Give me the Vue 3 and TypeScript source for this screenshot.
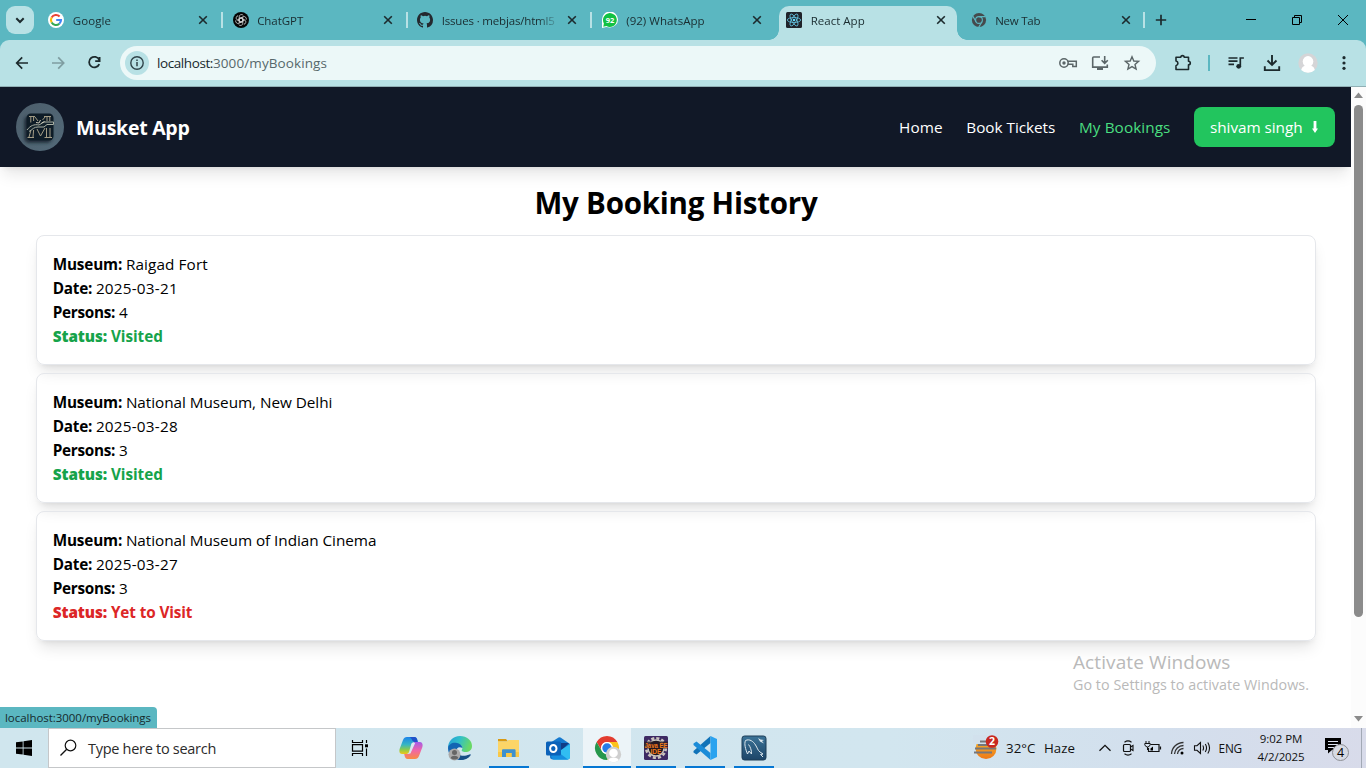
<script setup lang="ts">
import type { Directive } from 'vue'

interface Tab { title: string; icon: string; width: number; active?: boolean; sep?: boolean }
interface Booking {
  museum: string
  museumWidth: number
  date: string
  persons: number
  status: string
  statusWidth: number
  visited: boolean
}

const tabs: Tab[] = [
  { title: 'Google', icon: 'google', width: 38.5 },
  { title: 'ChatGPT', icon: 'gpt', width: 46, sep: true },
  { title: 'Issues · mebjas/html5', icon: 'github', width: 113, sep: true },
  { title: '(92) WhatsApp', icon: 'whatsapp', width: 78.5, sep: true },
  { title: 'React App', icon: 'react', width: 54, active: true },
  { title: 'New Tab', icon: 'chrome', width: 45 },
]

const bookings: Booking[] = [
  { museum: 'Raigad Fort', museumWidth: 82, date: '2025-03-21', persons: 4, status: 'Visited', statusWidth: 52, visited: true },
  { museum: 'National Museum, New Delhi', museumWidth: 206.5, date: '2025-03-28', persons: 3, status: 'Visited', statusWidth: 52, visited: true },
  { museum: 'National Museum of Indian Cinema', museumWidth: 250.5, date: '2025-03-27', persons: 3, status: 'Yet to Visit', statusWidth: 81.5, visited: false },
]

const apps = [
  { name: 'copilot', open: false },
  { name: 'edge', open: false },
  { name: 'files', open: true },
  { name: 'outlook', open: false },
  { name: 'chrome', open: true, active: true },
  { name: 'eclipse', open: true },
  { name: 'vscode', open: true },
  { name: 'mysql', open: true },
]

// Tracks a label so that it spans the given number of pixels.
const vFit: Directive<HTMLElement, number> = {
  mounted(el, { value }) {
    const count = (el.textContent ?? '').length
    if (!count) return
    const natural = el.getBoundingClientRect().width
    el.style.letterSpacing = `${((value - natural) / count).toFixed(3)}px`
  },
}
</script>

<template>
  <div class="screen">
    <div class="tabstrip">
      <div class="tab-search">
        <svg width="28" height="28" viewBox="0 0 28 28"><path d="M10.3 12.3l3.7 3.7 3.7-3.7" fill="none" stroke="#1d2b2e" stroke-width="2" /></svg>
      </div>
      <div v-for="t in tabs" :key="t.title" class="tab" :class="{ active: t.active, sep: t.sep }">
        <svg v-if="t.icon === 'google'" class="fav" viewBox="0 0 16 16">
          <circle cx="8" cy="8" r="8" fill="#fff" />
          <path d="M3.65 5.5A5 5 0 0 1 11.6 4.5" fill="none" stroke="#ea4335" stroke-width="2.1" />
          <path d="M3.65 5.5A5 5 0 0 0 3.65 10.5" fill="none" stroke="#fbbc05" stroke-width="2.1" />
          <path d="M3.65 10.5A5 5 0 0 0 11.3 11.7" fill="none" stroke="#34a853" stroke-width="2.1" />
          <path d="M11.3 11.7A5 5 0 0 0 13 8H8.2" fill="none" stroke="#4285f4" stroke-width="2.1" />
        </svg>
        <svg v-else-if="t.icon === 'gpt'" class="fav" viewBox="0 0 16 16">
          <circle cx="8" cy="8" r="8" fill="#050505" />
          <g fill="none" stroke="#d8d8d8" stroke-width=".75">
            <path v-for="a in 6" :key="a" :transform="`rotate(${a * 60} 8 8)`" d="M6.2 7V4.6A2.3 2.3 0 0 1 10.3 3.4M6.2 5l3.6 2.1V10" />
          </g>
        </svg>
        <svg v-else-if="t.icon === 'github'" class="fav" viewBox="0 0 16 16">
          <path fill="#24292f" d="M8 0C3.58 0 0 3.58 0 8c0 3.54 2.29 6.53 5.47 7.59.4.07.55-.17.55-.38 0-.19-.01-.82-.01-1.49-2.01.37-2.53-.49-2.69-.94-.09-.23-.48-.94-.82-1.13-.28-.15-.68-.52-.01-.53.63-.01 1.08.58 1.23.82.72 1.21 1.87.87 2.33.66.07-.52.28-.87.51-1.07-1.78-.2-3.64-.89-3.64-3.95 0-.87.31-1.59.82-2.15-.08-.2-.36-1.02.08-2.12 0 0 .67-.21 2.2.82a7.6 7.6 0 0 1 4 0c1.53-1.04 2.2-.82 2.2-.82.44 1.1.16 1.92.08 2.12.51.56.82 1.27.82 2.15 0 3.07-1.87 3.75-3.65 3.95.29.25.54.73.54 1.48 0 1.07-.01 1.93-.01 2.2 0 .21.15.46.55.38A8.01 8.01 0 0 0 16 8c0-4.42-3.58-8-8-8z" />
        </svg>
        <svg v-else-if="t.icon === 'whatsapp'" class="fav" viewBox="0 0 16 16">
          <path d="M0 16V8A8 8 0 1 1 8 15.500L4.200 15z" fill="#fff" />
          <path d="M1.300 14.700l.6-3.300A6.900 6.900 0 1 1 4.500 14z" fill="#12c143" />
          <text x="8.100" y="10.900" text-anchor="middle" class="badge92">92</text>
        </svg>
        <svg v-else-if="t.icon === 'react'" class="fav" viewBox="0 0 16 16">
          <rect width="16" height="16" rx="1.5" fill="#20232a" />
          <g fill="none" stroke="#61bfdc" stroke-width=".85">
            <ellipse cx="8" cy="8" rx="6.700" ry="2.500" />
            <ellipse cx="8" cy="8" rx="6.700" ry="2.500" transform="rotate(60 8 8)" />
            <ellipse cx="8" cy="8" rx="6.700" ry="2.500" transform="rotate(120 8 8)" />
          </g>
          <circle cx="8" cy="8" r="1.300" fill="#61dafb" />
        </svg>
        <svg v-else class="fav" viewBox="0 0 16 16">
          <circle cx="8" cy="8" r="7.100" fill="#454a4d" />
          <g stroke="#5bb7c1" stroke-width="1.100" fill="none">
            <circle cx="8" cy="8" r="3.400" />
            <path d="M8 4.600h6.500M5.050 9.700L1.800 4.100M10.950 9.700l-3.300 5.700" />
          </g>
        </svg>
        <span class="title"><span v-fit="t.width" class="fit">{{ t.title }}</span></span>
        <svg class="close" viewBox="0 0 10 10"><path d="M1.2 1.2l7.6 7.6M8.8 1.2L1.2 8.8" stroke="#1c2a2d" stroke-width="1.6" /></svg>
      </div>
      <div class="newtab">
        <svg width="12" height="12" viewBox="0 0 12 12"><path d="M6 .8v10.4M.8 6h10.4" stroke="#1c2a2d" stroke-width="1.7" /></svg>
      </div>
      <div class="winbtns">
        <svg viewBox="0 0 46 40"><path d="M18 19.5h10" stroke="#000" /></svg>
        <svg viewBox="0 0 46 40"><path d="M18.5 17.5h7v7h-7zM20.5 17.5v-2h7v7h-2" stroke="#000" fill="none" /></svg>
        <svg viewBox="0 0 46 40"><path d="M18 15l10 10M28 15L18 25" stroke="#000" /></svg>
      </div>
    </div>

    <div class="toolbar-wrap">
      <div class="toolbar">
        <svg class="nav-ic" viewBox="0 0 36 36"><path d="M28 18H17M22.2 12.4L16.7 18l5.5 5.6" stroke="#1c2a2d" stroke-width="1.7" fill="none" /></svg>
        <svg class="nav-ic" viewBox="0 0 36 36"><path d="M12 18h11.3M18.2 12.4l5.500 5.600-5.500 5.600" stroke="#7f9da1" stroke-width="1.7" fill="none" /></svg>
        <svg class="nav-ic" viewBox="0 0 36 36"><path d="M23.2 14.8A5.3 5.3 0 1 0 23.3 19.2M23.6 12v4.200h-4.400" stroke="#1c2a2d" stroke-width="1.8" fill="none" /></svg>
        <div class="omnibox">
          <div class="site-info">
            <svg width="16" height="16" viewBox="0 0 16 16"><circle cx="8" cy="8" r="6.2" fill="none" stroke="#30444a" stroke-width="1.4" /><path d="M8 7v4.3M8 4.5v1.5" stroke="#30444a" stroke-width="1.5" /></svg>
          </div>
          <span class="url"><span v-fit="56" class="fit host">localhost:</span><span v-fit="114" class="fit">3000/myBookings</span></span>
          <svg class="om-ic" viewBox="0 0 20 20">
            <g fill="none" stroke="#5b6668" stroke-width="1.500"><path d="M9.500 8.300h8.800v5.200h-3.500v-2.200H9.500" /><circle cx="6" cy="10" r="4.200" /></g>
            <circle cx="6" cy="10" r="1.700" fill="#5b6668" />
          </svg>
          <svg class="om-ic" viewBox="0 0 20 20"><path d="M10 4H3.700a1 1 0 0 0-1 1v9.100h14.600V11.500M14.700 3v7M11.600 7.200l3.100 3.100 3.100-3.100" fill="none" stroke="#5b6668" stroke-width="1.600" /><path d="M7 14h6v3H7z" fill="#5b6668" /></svg>
          <svg class="om-ic" viewBox="0 0 20 20"><path d="M10 3.700l1.800 4.300 4.800.4-3.600 3.100 1.100 4.600L10 13.600l-4.100 2.500L7 11.500 3.400 8.400 8.200 8z" fill="none" stroke="#5b6668" stroke-width="1.400" /></svg>
        </div>
        <div class="tools">
          <svg viewBox="0 0 20 20"><path d="M3 4.300H7.800a1.700 1.700 0 0 1 3.400 0H15.500V8.300a1.800 1.800 0 0 1 0 3.600V16.500H3V12.700a2.400 2.400 0 0 0 0-4.700z" fill="none" stroke="#1c2a2d" stroke-width="1.600" stroke-linejoin="round" /></svg>
          <i class="tool-sep"></i>
          <svg viewBox="0 0 20 20"><path d="M2.500 5h9M2.500 8.200h9M2.500 11.400h5.500M14.300 13.500V5h3.600" fill="none" stroke="#1c2a2d" stroke-width="1.700" /><circle cx="12.700" cy="13.300" r="2.400" fill="#1c2a2d" /></svg>
          <svg viewBox="0 0 20 20"><path d="M10 2v9.500M5.500 7.500L10 12l4.500-4.500M2.800 13.200v3.900h14.400v-3.900" fill="none" stroke="#1c2a2d" stroke-width="1.900" /></svg>
          <svg viewBox="0 0 20 20"><circle cx="10" cy="10" r="9.700" fill="#d5d5d7" /><circle cx="10" cy="8.400" r="5.300" fill="#fff" /><path d="M3.200 17c1-4 3.800-4.500 6.800-4.500s5.800.5 6.800 4.500A9.700 9.700 0 0 1 3.200 17z" fill="#fff" /></svg>
          <svg viewBox="0 0 20 20"><g fill="#1c2a2d"><circle cx="10" cy="4.700" r="1.600" /><circle cx="10" cy="10" r="1.600" /><circle cx="10" cy="15.300" r="1.600" /></g></svg>
        </div>
      </div>
    </div>

    <div class="viewport">
      <div class="page">
        <header class="app-header">
          <svg class="logo" viewBox="0 0 48 48">
            <defs>
              <linearGradient id="lg" x1="0" y1="0" x2="1" y2="1"><stop offset="0" stop-color="#4d5e6b" /><stop offset="1" stop-color="#526978" /></linearGradient>
              <filter id="soft" x="-30%" y="-30%" width="160%" height="160%"><feGaussianBlur stdDeviation="1.600" /></filter>
            </defs>
            <circle cx="24" cy="24" r="24" fill="url(#lg)" />
            <rect x="8" y="13" width="28" height="27" rx="5" fill="#17232d" opacity=".8" filter="url(#soft)" />
            <rect x="10.500" y="10.500" width="27" height="27" rx="4.500" fill="#0e1c27" />
            <g fill="none" stroke="#a39c85" stroke-width="1">
              <path d="M13 13.500h6M14.800 14v5.500M17.600 14v4M19 14l3 4M28 13.500h7M26.500 17l3-3.500M31 14v4M33.800 14v4" />
              <path d="M11.500 34.500h6.500M13 34l2-7M17 34l.6-7M28.500 34.500h7.500M30.500 34V25M34 34V25M21 26l3.500 7 4.500-8" />
            </g>
            <path d="M11 27c3.500-4.500 7-6 12-5l5-3h9.500v2.500H31l-3 2.500h-6c-4 0-5 2-9 4.500" fill="#14232c" stroke="#a9b0a4" stroke-width="1" />
            <path d="M20 19.500l3 .5 1.500-3M25.500 20l3-1.500" fill="none" stroke="#c9c7b5" />
          </svg>
          <span class="brand"><span v-fit="113.500" class="fit">Musket App</span></span>
          <nav class="links">
            <a class="fit" v-fit="43.500">Home</a>
            <a class="fit" v-fit="89">Book Tickets</a>
            <a class="fit current" v-fit="91.500">My Bookings</a>
          </nav>
          <button class="user">
            <span v-fit="92.500" class="fit">shivam singh</span>
            <svg width="8" height="12" viewBox="0 0 8 12"><path d="M2.600 0h2.800v7.500H7L4 12 1 7.500h1.600z" fill="#fff" /></svg>
          </button>
        </header>

        <main class="content">
          <h1><span v-fit="283" class="fit">My Booking History</span></h1>
          <section v-for="b in bookings" :key="b.museum" class="card">
            <p><strong v-fit="69.500" class="fit">Museum:</strong><span v-fit="b.museumWidth" class="fit">{{ b.museum }}</span></p>
            <p><strong v-fit="39.500" class="fit">Date:</strong><span v-fit="82" class="fit">{{ b.date }}</span></p>
            <p><strong v-fit="62.500" class="fit">Persons:</strong><span>{{ b.persons }}</span></p>
            <p class="status" :class="b.visited ? 'ok' : 'pending'"><strong v-fit="54.500" class="fit">Status:</strong><span v-fit="b.statusWidth" class="fit">{{ b.status }}</span></p>
          </section>
        </main>
      </div>
      <div class="scrollbar">
        <svg width="15" height="18" viewBox="0 0 15 18"><path d="M3 11L7.500 5.500 12 11z" fill="#8b8b8b" /></svg>
        <div class="thumb"></div>
        <svg class="down" width="15" height="18" viewBox="0 0 15 18"><path d="M3 6l4.500 5.500L12 6z" fill="#8b8b8b" /></svg>
      </div>
      <div class="watermark">
        <div class="wm-title"><span v-fit="157.500" class="fit">Activate Windows</span></div>
        <div class="wm-sub"><span v-fit="236" class="fit">Go to Settings to activate Windows.</span></div>
      </div>
      <div class="link-status"><span v-fit="146" class="fit">localhost:3000/myBookings</span></div>
    </div>

    <footer class="taskbar">
      <div class="start">
        <svg width="16" height="16" viewBox="0 0 16 16"><path d="M0 2.300l6.700-.9v6.200H0zM7.500 1.300L16 0v7.600H7.500zM0 8.400h6.700v6.200L0 13.700zM7.500 8.400H16V16l-8.500-1.200z" /></svg>
      </div>
      <div class="search">
        <svg width="18" height="18" viewBox="0 0 18 18"><circle cx="10.500" cy="6.500" r="5.300" fill="none" stroke="#111" stroke-width="1.200" /><path d="M6.700 10.300L.5 16.500" stroke="#111" stroke-width="1.300" /></svg>
        <span v-fit="128" class="fit">Type here to search</span>
      </div>
      <div class="taskview">
        <svg width="18" height="18" viewBox="0 0 18 18"><path d="M1.500 1v2.500h10V1M1.500 17v-2.500h10V17M1.500 5.700h10v6.500h-10zM15.500 1v3M15.500 9.500V17" fill="none" stroke="#000" stroke-width="1.200" /><path d="M14 5.300h3v3h-3z" /></svg>
      </div>
      <div v-for="a in apps" :key="a.name" class="app" :class="{ open: a.open, on: a.active }">
        <svg v-if="a.name === 'copilot'" width="26" height="26" viewBox="0 0 26 26">
          <defs>
            <linearGradient id="cp1" x1="0" y1="0" x2="0" y2="1"><stop offset="0" stop-color="#1c83ea" /><stop offset=".45" stop-color="#36b6c4" /><stop offset=".75" stop-color="#8ccb4b" /><stop offset="1" stop-color="#f2c516" /></linearGradient>
            <linearGradient id="cp2" x1="0" y1="0" x2="0" y2="1"><stop offset="0" stop-color="#a45ce8" /><stop offset=".5" stop-color="#f067a6" /><stop offset="1" stop-color="#f98b42" /></linearGradient>
          </defs>
          <path d="M9 2h7.500c1.500 0 2.200 1 2.700 2.500l.6 2.500h-3.200c-2 0-3 1-3.600 3L11 17c-.6 1.500-1.500 2-3 2H4.500C1.800 19 .8 17 1.600 14L5 5c.8-2 2-3 4-3z" fill="url(#cp1)" />
          <path d="M17 24H9.500c-1.500 0-2.200-1-2.700-2.500L6.200 19h3.200c2 0 3-1 3.600-3L15 9c.6-1.500 1.500-2 3-2h3.500c2.700 0 3.700 2 2.900 5L21 21c-.8 2-2 3-4 3z" fill="url(#cp2)" />
          <path d="M11.500 2h5c1.500 0 2.200 1 2.700 2.500l.6 2.500h-3c-3 0-2.500-4-5.300-5z" fill="#2152c9" />
          <path d="M13.900 8h3.300l-4.800 10.500H9.200c2 0 2.600-1 3.200-2.500z" fill="#d8e9f0" />
        </svg>
        <svg v-else-if="a.name === 'edge'" width="26" height="26" viewBox="0 0 26 26">
          <defs><linearGradient id="ed" x1="0" y1="0" x2="1" y2=".3"><stop offset="0" stop-color="#239bd8" /><stop offset=".5" stop-color="#30bfc9" /><stop offset="1" stop-color="#68d866" /></linearGradient></defs>
          <path d="M1 13C1 6 6 1 13 1c7 0 12 4.500 12 10 0 4-3 6-6.500 6-3 0-4.500-1-3.500-2.500 1.500-2.500-1-5-4-5C6 9.500 1.500 12 1 13z" fill="url(#ed)" />
          <path d="M1 13C1.500 9 6 7 10 8c3 .6 5.500 3 5.500 5-4-2-6.500.5-6 3.500.6 4 6 6.500 13 3.500-2 3-5.500 5-9.500 5C6 25 1 20 1 13z" fill="#1265b3" />
          <path d="M9.500 16c.6 4 6 6.500 13 3.500 1-.5 1.500.2 1 1-2 3-6 4.500-10.500 4.500-3-1-5-5-3.500-9z" fill="#164e86" />
          <circle cx="7.500" cy="19.500" r="6" fill="#aaa" /><circle cx="7.500" cy="17.500" r="2.500" fill="#666" /><path d="M3.700 23c.5-3 7-3 7.600 0-2 2-5.500 2-7.600 0z" fill="#666" />
        </svg>
        <svg v-else-if="a.name === 'files'" width="26" height="26" viewBox="0 0 26 26">
          <path d="M2 4h8l2 2.500H2z" fill="#d99a13" /><path d="M2 6.500h9l1.500-1.500H23v17H2z" fill="#fcd567" /><path d="M2 17h21v5H2z" fill="#f9c846" />
          <path d="M6 22v-6.500c0-.8.500-1.300 1.300-1.300h11c.8 0 1.300.5 1.300 1.300V22h-3.800v-4H10v4z" fill="#3d91d0" />
        </svg>
        <svg v-else-if="a.name === 'outlook'" width="26" height="26" viewBox="0 0 26 26">
          <path d="M5 8L13.500 2.500Q14.500 2 15.500 2.500L25 9v13c0 1.500-1 2.500-2.500 2.500H8C6 24.500 5 23.500 5 22z" fill="#1579cf" />
          <path d="M8 8h16l-8 8-8-3z" fill="#123d86" /><path d="M13 17l12-8v13c0 1.500-1 2.500-2.500 2.500H9z" fill="#31bdf2" /><path d="M6 21l7-4 10 7.500H8z" fill="#168fe0" />
          <rect x="1" y="6.500" width="15" height="14" rx="1.500" fill="#0b62b9" /><ellipse cx="8.300" cy="13.500" rx="3.200" ry="3.600" fill="none" stroke="#fff" stroke-width="2" />
        </svg>
        <svg v-else-if="a.name === 'chrome'" class="chrome-app" width="28" height="28" viewBox="0 0 28 28">
          <circle cx="13" cy="13" r="12" fill="#fff" />
          <path d="M2.600 7a12 12 0 0 1 20.800 0H13a6 6 0 0 0-5.200 9z" fill="#e23c30" />
          <path d="M23.400 7A12 12 0 0 1 13 25l5.200-9A6 6 0 0 0 13 7z" fill="#fcc21b" />
          <path d="M2.600 7A12 12 0 0 0 13 25l5.200-9a6 6 0 0 1-10.400 0z" fill="#26974c" />
          <circle cx="13" cy="13" r="5.900" fill="#fff" /><circle cx="13" cy="13" r="4.700" fill="#267be8" />
          <circle cx="19.500" cy="19.500" r="7.700" fill="#cfcfcf" /><circle cx="19.500" cy="18" r="4.300" fill="#fff" /><path d="M14.300 25c.8-3.500 9.600-3.500 10.400 0-3 3-7.400 3-10.400 0z" fill="#fff" />
        </svg>
        <svg v-else-if="a.name === 'eclipse'" width="26" height="26" viewBox="0 0 26 26">
          <rect x="1" y="1" width="24" height="24" rx="1.500" fill="#3d2a63" />
          <circle cx="13" cy="13" r="9.800" fill="none" stroke="#c9c4bd" stroke-width="2.600" stroke-dasharray="3.100 2.030" />
          <circle cx="13" cy="13" r="8" fill="#1c1720" stroke="#c9c4bd" stroke-width="1.500" />
          <rect x="1" y="6.500" width="24" height="7" fill="#2b1c25" opacity=".8" />
          <text x="13" y="12.500" text-anchor="middle" class="ee" textLength="23" lengthAdjust="spacingAndGlyphs">Java EE</text>
          <text x="13" y="18.800" text-anchor="middle" class="ee" textLength="11" lengthAdjust="spacingAndGlyphs">IDE</text>
        </svg>
        <svg v-else-if="a.name === 'vscode'" width="26" height="26" viewBox="0 0 26 26">
          <path d="M18.500 1v7L4.500 19.500 1.500 17.500v-1.500z" fill="#1173b8" /><path d="M18.500 25v-7L4.500 6.500 1.500 8.500V10z" fill="#1b8cd8" /><path d="M18.500 1L25 4v18l-6.500 3z" fill="#2ba3ef" />
        </svg>
        <svg v-else width="26" height="26" viewBox="0 0 26 26">
          <defs><linearGradient id="my" x1="0" y1="0" x2="0" y2="1"><stop offset="0" stop-color="#3b7397" /><stop offset="1" stop-color="#1d4568" /></linearGradient></defs>
          <rect x="1" y="1" width="24" height="24" rx="2.500" fill="url(#my)" stroke="#1c3d57" />
          <path d="M6.500 19C4.500 14 3 9 4.500 5.500c4-2 8 1 10 4.500 2 3 2 5 4.500 7l3 2-2.500.5 2.500 2.500M6.500 19l1.500-3 2.500 3c0-4-1-7-3-9.500" fill="none" stroke="#dfe9ef" stroke-width="1" />
          <path d="M17 3l2.500 1.500L23 5l-2 1 2 2.500-4-2z" fill="#dfe9ef" />
        </svg>
      </div>
      <div class="tray">
        <svg class="weather" viewBox="0 0 26 26">
          <defs><linearGradient id="sun" x1="0" y1="0" x2="0" y2="1"><stop offset="0" stop-color="#f8b92c" /><stop offset="1" stop-color="#ee7917" /></linearGradient></defs>
          <circle cx="13" cy="13.500" r="10.500" fill="url(#sun)" />
          <path d="M0 0h14v9H0z" fill="#d2e1ed" />
          <path d="M7 6.500h6M5 10h13M2 13.500h21M1 17.500h18" stroke="#76767a" stroke-width="1.900" />
          <circle cx="19" cy="6.500" r="6.300" fill="#c82820" /><text x="19" y="10.300" text-anchor="middle" class="wbadge">2</text>
        </svg>
        <span v-fit="29.500" class="fit temp">32°C</span>
        <span v-fit="31" class="fit haze">Haze</span>
        <svg class="chev" viewBox="0 0 14 14"><path d="M1.500 9.800L7 4.300l5.500 5.500" fill="none" stroke="#111" stroke-width="1.300" /></svg>
        <svg class="meet" viewBox="0 0 16 18"><rect x="2.500" y="5.500" width="7" height="7" rx="1" fill="none" stroke="#111" stroke-width="1.200" /><path d="M9.500 8l2.500-1.500v5L9.500 10M3.500 3.200Q7 .6 10.500 3.200M3.500 14.800Q7 17.400 10.500 14.800" fill="none" stroke="#111" stroke-width="1.100" /></svg>
        <svg class="batt" viewBox="0 0 18 16"><path d="M6.500 4.500H15v7H4.500V8M16.500 6.500v3" fill="none" stroke="#111" stroke-width="1.200" /><path d="M6.500 10.500v-2l2.500-2v4z" /><path d="M2 1v2.500M5 1v2.500M.8 3.500h5.400v1.300Q5.500 7 3.500 7T.8 4.800z" fill="none" stroke="#111" /><path d="M3.500 7v3" stroke="#111" /></svg>
        <svg class="wifi" viewBox="0 0 16 16"><path d="M1.500 14A12 12 0 0 1 13.500 2.500M4.500 14A9 9 0 0 1 13.500 5.500M7.500 14a6 6 0 0 1 6-5.500" fill="none" stroke="#333" stroke-width="1.300" /><circle cx="12" cy="13" r="1.500" /></svg>
        <svg class="vol" viewBox="0 0 18 16"><path d="M1.500 5.700h2.500L7.500 2.500v11L4 10.300H1.500zM9.800 5.500q1.500 2.500 0 5M12.300 4q2.500 4 0 8M14.800 2.500q3.500 5.500 0 11" fill="none" stroke="#111" stroke-width="1.100" /></svg>
        <span v-fit="23.500" class="fit eng">ENG</span>
        <div class="clock"><span v-fit="42.500" class="fit">9:02 PM</span><span v-fit="47" class="fit">4/2/2025</span></div>
        <svg class="notif" viewBox="0 0 26 26"><path d="M1 2h16v12H8l-4 3.500V14H1z" /><path d="M4 5.500h10M4 8.500h10M4 11.500h6" stroke="#dce2ee" /><circle cx="16.500" cy="16.500" r="8" fill="#d6dae3" stroke="#8d8f94" /><text x="16.500" y="21" text-anchor="middle" class="nbadge">4</text></svg>
        <i class="peek"></i>
      </div>
    </footer>
  </div>
</template>

<style>
body { margin: 0; overflow: hidden; background: #fff; }
</style>

<style scoped>
.screen { width: 1366px; height: 768px; display: flex; flex-direction: column; overflow: hidden; font-family: "Open Sans", "Noto Sans", sans-serif; color: #000; }
.screen svg { display: block; flex: none; }
.fit { display: inline-block; white-space: nowrap; }

.tabstrip { height: 40px; flex: none; display: flex; background: #5bb7c1; }
.tab-search { width: 28px; height: 28px; margin: 6px 3.700px 0 6px; border-radius: 9px; background: #b8e1e5; }
.tab { width: 184.500px; height: 40px; flex: none; box-sizing: border-box; display: flex; align-items: center; padding: 0 14px 0 10.500px; position: relative; font-size: 11.500px; color: #1a2c30; }
.tab.sep::before { content: ""; position: absolute; left: -.8px; top: 12px; width: 2px; height: 16px; background: #b8e1e5; }
.fav { width: 16px; height: 16px; position: relative; z-index: 1; }
.title { margin-left: 8.500px; position: relative; z-index: 1; height: 20px; line-height: 21px; width: 114px; -webkit-mask-image: linear-gradient(90deg, #000 84%, transparent 104%); mask-image: linear-gradient(90deg, #000 84%, transparent 104%); }
.close { width: 10px; height: 10px; margin-left: auto; position: relative; z-index: 1; }
.tab.active::before { content: ""; position: absolute; left: 3px; right: 3.500px; top: 6px; bottom: 0; border-radius: 10px 10px 0 0; background: #b8e1e5; }
.tab.active::after { content: ""; position: absolute; left: -7px; right: -6.500px; bottom: 0; height: 10px; background: radial-gradient(circle at 0 0, transparent 9.500px, #b8e1e5 10px) left / 10px 10px no-repeat, radial-gradient(circle at 100% 0, transparent 9.500px, #b8e1e5 10px) right / 10px 10px no-repeat; }
.newtab { width: 33px; display: flex; align-items: center; justify-content: center; position: relative; }
.newtab::before { content: ""; position: absolute; left: -1.500px; top: 12px; width: 2px; height: 16px; background: #b8e1e5; }
.winbtns { margin-left: auto; display: flex; }
.winbtns svg { width: 46px; height: 40px; }

.toolbar-wrap { height: 47px; flex: none; background: #5bb7c1; }
.toolbar { height: 47px; box-sizing: border-box; background: #b8e1e5; border-radius: 9px 9px 0 0; border-bottom: 1px solid #91b0b5; display: flex; align-items: center; }
.nav-ic { width: 36px; height: 36px; }
.nav-ic:first-child { margin-right: 4px; }
.omnibox { width: 1036px; height: 34px; flex: none; box-sizing: border-box; margin-left: 8px; border-radius: 17px; background: #ecf8f8; display: flex; align-items: center; padding: 0 14px 0 5px; gap: 12px; }
.site-info { width: 24px; height: 24px; border-radius: 50%; background: #b8e1e5; display: flex; align-items: center; justify-content: center; margin-right: -4px; }
.url { flex: 1; font-size: 13.500px; line-height: 20px; color: #57686b; }
.host { color: #17282c; }
.om-ic { width: 20px; height: 20px; }
.tools { display: flex; align-items: center; margin-left: 17px; gap: 16px; }
.tools svg { width: 20px; height: 20px; }
.tool-sep { width: 2px; height: 16px; background: #5bb7c1; margin: 0 0 0 -1px; }

.viewport { height: 641px; flex: none; display: flex; position: relative; background: #fff; }
.page { width: 1351px; overflow: hidden; }
.app-header { height: 80px; box-sizing: border-box; padding: 0 16px; display: flex; align-items: center; background: #111827; color: #fff; box-shadow: 0 10px 15px -3px rgba(0, 0, 0, .1), 0 4px 6px -4px rgba(0, 0, 0, .1); }
.logo { width: 48px; height: 48px; margin-right: 12px; }
.brand { font-size: 19.500px; font-weight: 700; line-height: 28px; padding-top: 1px; }
.links { margin-left: auto; display: flex; gap: 23.700px; margin-right: 23.500px; font-size: 15.300px; line-height: 24px; }
.current { color: #4ade80; }
.user { width: 141px; height: 40px; box-sizing: border-box; border: 0; border-radius: 8px; background: #22c55e; color: #fff; font: 15.300px/24px "Open Sans", "Noto Sans", sans-serif; padding: 0 16px; display: flex; align-items: center; gap: 8px; }
.content { padding: 16px 35px 0 36px; display: flex; flex-direction: column; gap: 8px; }
h1 { margin: 2px 0 6px; font-size: 29.500px; line-height: 36px; font-weight: 700; text-align: center; }
.card { height: 130px; box-sizing: border-box; border: 1px solid #e5e7eb; border-radius: 8px; padding: 16px 16px 16px 15.700px; box-shadow: 0 10px 15px -3px rgba(0, 0, 0, .1), 0 4px 6px -4px rgba(0, 0, 0, .1); }
.card p { margin: 0; height: 24px; line-height: 24px; font-size: 15.300px; display: flex; gap: 3.700px; }
.card strong { font-weight: 700; }
.status { font-weight: 700; }
.card .status strong { font-weight: 800; }
.ok { color: #16a34a; }
.pending { color: #dc2626; }

.scrollbar { width: 15px; background: #fcfcfc; display: flex; flex-direction: column; }
.thumb { width: 9px; height: 512px; margin-left: 3px; border-radius: 4.500px; background: #8b8b8b; }
.down { margin-top: auto; }
.watermark { position: absolute; left: 1073px; top: 562px; color: #b9b9b9; }
.wm-title { font-size: 19px; line-height: 26px; }
.wm-sub { font-size: 14.300px; line-height: 20px; }
.link-status { position: absolute; left: 0; bottom: 0; width: 157px; height: 21px; box-sizing: border-box; padding-left: 5px; background: #5bb7c1; border-top-right-radius: 4px; font-size: 11.500px; line-height: 22px; color: #15292d; }

.taskbar { height: 40px; flex: none; display: flex; background: linear-gradient(90deg, #d0e6ee, #d2e6ef 65%, #d3dfed 85%, #d8dbea); }
.start { width: 48px; display: flex; align-items: center; justify-content: center; }
.search { width: 288px; box-sizing: border-box; background: #fff; border: 1px solid #c5c7c9; display: flex; align-items: center; gap: 10px; padding-left: 11px; font-size: 14.500px; color: #2b2b2b; }
.taskview { width: 48px; display: flex; align-items: center; justify-content: center; margin-right: 3px; }
.app { width: 48px; margin-right: 1px; flex: none; display: flex; align-items: center; justify-content: center; position: relative; }
.app.open::after { content: ""; position: absolute; left: 4px; right: 4px; bottom: 0; height: 2px; background: #0577d3; }
.app.on { background: #ecf4f8; }
.app.on::after { left: 0; right: 0; }
.chrome-app { margin: 2px 0 0 2px; }
.tray { margin-left: auto; display: flex; align-items: center; color: #111; font-size: 13.300px; }
.weather { width: 26px; height: 26px; margin-right: 7px; }
.temp { margin-right: 8.500px; }
.haze { margin-right: 23px; }
.chev { width: 14px; height: 14px; margin-right: 9px; }
.meet { width: 16px; height: 18px; margin-right: 7px; }
.batt { width: 18px; height: 16px; margin-right: 8px; }
.wifi { width: 16px; height: 16px; margin-right: 6.500px; }
.vol { width: 18px; height: 16px; margin-right: 8px; }
.eng { font-size: 11.800px; margin-right: 15.500px; }
.clock { width: 47px; display: flex; flex-direction: column; align-items: center; font-size: 11.500px; line-height: 18px; margin-right: 19.500px; }
.notif { width: 26px; height: 26px; margin: 2px 11px 0 0; }
.peek { width: 4px; height: 40px; border-left: 1px solid #a2a9b5; }

.badge92 { font: 700 7.500px "Open Sans", sans-serif; fill: #fff; }
.ee { font: 700 7px "Liberation Sans", sans-serif; fill: #f27a1a; }
.wbadge { font: 700 10.500px "Open Sans", sans-serif; fill: #fff; }
.nbadge { font: 12.500px "Open Sans", sans-serif; fill: #000; }
</style>
